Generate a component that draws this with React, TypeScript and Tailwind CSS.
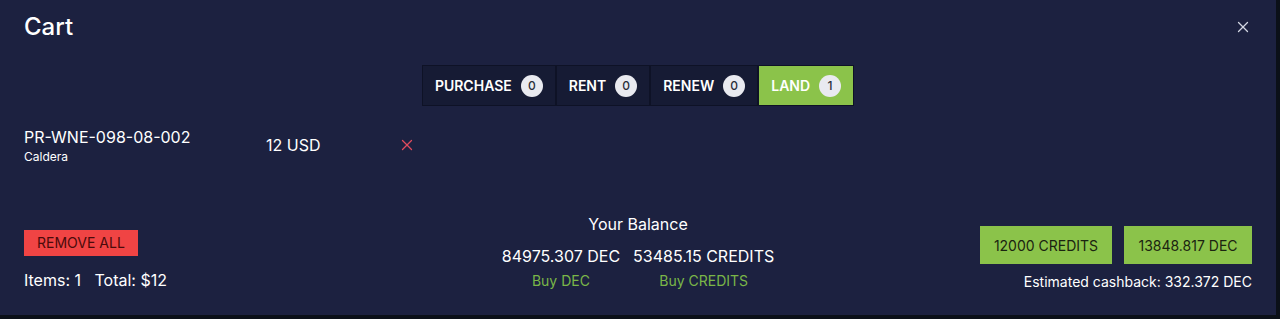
import { X } from "lucide-react";

const tabs = [
  { label: "PURCHASE", count: 0 },
  { label: "RENT", count: 0 },
  { label: "RENEW", count: 0 },
  { label: "LAND", count: 1, active: true },
];

const App = () => {
  return (
    <div className="w-[1280px] h-[319px] bg-[#0b1018] font-['Inter','Noto_Sans',sans-serif] text-white">
      <div className="w-[1276px] h-[315px] bg-[#1c2140] flex flex-col px-6">
        {/* header */}
        <div className="flex justify-between items-start pt-[11px]">
          <h2 className="text-[24px] leading-[32px] font-medium">Cart</h2>
          <button className="mt-[7px] text-[#d3d6e2]">
            <X size={18} strokeWidth={1.75} />
          </button>
        </div>

        {/* tabs */}
        <div className="flex justify-center mt-[22px]">
          {tabs.map((t) => (
            <div
              key={t.label}
              className={
                "h-[41px] flex items-center gap-[9px] px-3 border border-[#0e1226] text-[14px] font-semibold " +
                (t.active ? "bg-[#8bc34a]" : "bg-[#161b34]")
              }
            >
              <span>{t.label}</span>
              <span className="w-[22px] h-[22px] rounded-full bg-[#e9eaf0] text-[#2b2f3a] text-[12px] font-medium flex items-center justify-center">
                {t.count}
              </span>
            </div>
          ))}
        </div>

        {/* item row */}
        <div className="flex items-center mt-[19px]">
          <div className="w-[242px]">
            <div className="text-[16px] leading-[24px]">PR-WNE-098-08-002</div>
            <div className="text-[12px] leading-[16px]">Caldera</div>
          </div>
          <div className="w-[132px] text-[16px] leading-[24px]">12 USD</div>
          <button className="text-[#e04a5c]">
            <X size={18} strokeWidth={1.75} />
          </button>
        </div>

        {/* footer */}
        <div className="grid grid-cols-[1fr_auto_1fr] items-start mt-[40px]">
          <div className="flex flex-col items-start">
            <button className="mt-[25px] h-[26px] px-[13px] bg-[#f04444] text-[#4a0b0b] text-[14px] leading-none">
              REMOVE ALL
            </button>
            <div className="mt-[12px] text-[16px] leading-[24px]">
              Items: 1&nbsp;&nbsp; Total: $12
            </div>
          </div>

          <div className="flex flex-col items-center">
            <div className="mt-[7px] text-[16px] leading-[24px]">Your Balance</div>
            <div className="flex gap-[13px] mt-[8px]">
              <div className="flex flex-col items-center">
                <span className="text-[16px] leading-[24px]">84975.307 DEC</span>
                <a className="mt-[3px] text-[14px] leading-[20px] text-[#7ab648]">Buy DEC</a>
              </div>
              <div className="flex flex-col items-center">
                <span className="text-[16px] leading-[24px]">53485.15 CREDITS</span>
                <a className="mt-[3px] text-[14px] leading-[20px] text-[#7ab648]">Buy CREDITS</a>
              </div>
            </div>
          </div>

          <div className="flex flex-col items-end">
            <div className="flex gap-3 mt-[21px]">
              <button className="h-[38px] w-[132px] bg-[#8bc34a] text-[#1b2410] text-[14px]">
                12000 CREDITS
              </button>
              <button className="h-[38px] w-[128px] bg-[#8bc34a] text-[#1b2410] text-[14px]">
                13848.817 DEC
              </button>
            </div>
            <div className="mt-[8px] text-[14px] leading-[20px]">
              Estimated cashback: 332.372 DEC
            </div>
          </div>
        </div>
      </div>
    </div>
  );
};

export default App;
